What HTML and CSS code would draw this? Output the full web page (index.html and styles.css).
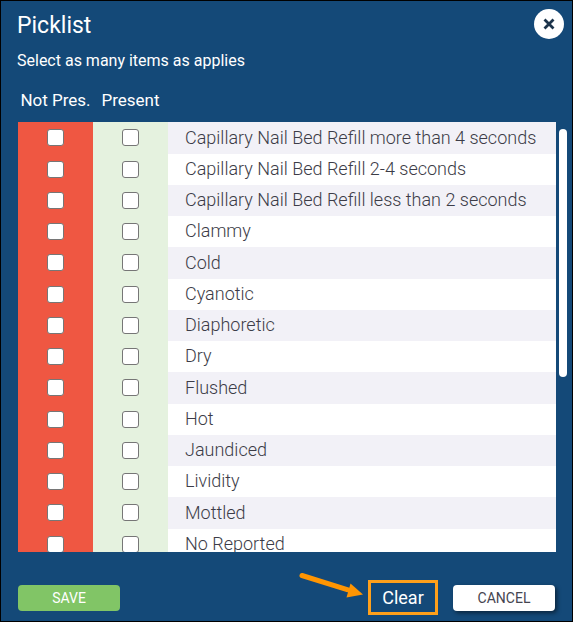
FILE: index.html
```html
<!DOCTYPE html>
<html lang="en">
<head>
<meta charset="utf-8">
<meta name="viewport" content="width=device-width, initial-scale=1">
<title>Picklist</title>
<link rel="stylesheet" href="styles.css">
</head>
<body>
<main class="dialog">
  <header class="header">
    <div>
      <h1 class="title">Picklist</h1>
      <p class="hint">Select as many items as applies</p>
    </div>
    <button class="close" type="button" aria-label="Close">
      <svg width="12" height="12" viewBox="0 0 12 12" aria-hidden="true"><path d="M1.5 1.5 10.5 10.5M10.5 1.5 1.5 10.5" stroke="#1c344b" stroke-width="2.8" fill="none"/></svg>
    </button>
  </header>
  <div class="list">
    <div class="scroller">
      <table class="items">
        <thead>
          <tr><th class="pick" scope="col">Not Pres.</th><th class="pick" scope="col">Present</th><th></th></tr>
        </thead>
        <tbody>
          <tr><td class="absent"><input type="checkbox" aria-label="Not present: Capillary Nail Bed Refill more than 4 seconds"></td><td class="present"><input type="checkbox" id="p1"></td><td class="name"><label for="p1">Capillary Nail Bed Refill more than 4 seconds</label></td></tr>
          <tr><td class="absent"><input type="checkbox" aria-label="Not present: Capillary Nail Bed Refill 2-4 seconds"></td><td class="present"><input type="checkbox" id="p2"></td><td class="name"><label for="p2">Capillary Nail Bed Refill 2-4 seconds</label></td></tr>
          <tr><td class="absent"><input type="checkbox" aria-label="Not present: Capillary Nail Bed Refill less than 2 seconds"></td><td class="present"><input type="checkbox" id="p3"></td><td class="name"><label for="p3">Capillary Nail Bed Refill less than 2 seconds</label></td></tr>
          <tr><td class="absent"><input type="checkbox" aria-label="Not present: Clammy"></td><td class="present"><input type="checkbox" id="p4"></td><td class="name"><label for="p4">Clammy</label></td></tr>
          <tr><td class="absent"><input type="checkbox" aria-label="Not present: Cold"></td><td class="present"><input type="checkbox" id="p5"></td><td class="name"><label for="p5">Cold</label></td></tr>
          <tr><td class="absent"><input type="checkbox" aria-label="Not present: Cyanotic"></td><td class="present"><input type="checkbox" id="p6"></td><td class="name"><label for="p6">Cyanotic</label></td></tr>
          <tr><td class="absent"><input type="checkbox" aria-label="Not present: Diaphoretic"></td><td class="present"><input type="checkbox" id="p7"></td><td class="name"><label for="p7">Diaphoretic</label></td></tr>
          <tr><td class="absent"><input type="checkbox" aria-label="Not present: Dry"></td><td class="present"><input type="checkbox" id="p8"></td><td class="name"><label for="p8">Dry</label></td></tr>
          <tr><td class="absent"><input type="checkbox" aria-label="Not present: Flushed"></td><td class="present"><input type="checkbox" id="p9"></td><td class="name"><label for="p9">Flushed</label></td></tr>
          <tr><td class="absent"><input type="checkbox" aria-label="Not present: Hot"></td><td class="present"><input type="checkbox" id="p10"></td><td class="name"><label for="p10">Hot</label></td></tr>
          <tr><td class="absent"><input type="checkbox" aria-label="Not present: Jaundiced"></td><td class="present"><input type="checkbox" id="p11"></td><td class="name"><label for="p11">Jaundiced</label></td></tr>
          <tr><td class="absent"><input type="checkbox" aria-label="Not present: Lividity"></td><td class="present"><input type="checkbox" id="p12"></td><td class="name"><label for="p12">Lividity</label></td></tr>
          <tr><td class="absent"><input type="checkbox" aria-label="Not present: Mottled"></td><td class="present"><input type="checkbox" id="p13"></td><td class="name"><label for="p13">Mottled</label></td></tr>
          <tr><td class="absent"><input type="checkbox" aria-label="Not present: No Reported"></td><td class="present"><input type="checkbox" id="p14"></td><td class="name"><label for="p14">No Reported</label></td></tr>
        </tbody>
      </table>
    </div>
    <div class="track" aria-hidden="true"><div class="thumb"></div></div>
  </div>
  <footer class="footer">
    <button class="btn save" type="button">SAVE</button>
    <div class="clear-group">
      <svg class="arrow" width="66" height="30" viewBox="0 0 66 30" aria-hidden="true"><path d="M5 4.5 51 18.8" stroke="#ff9502" stroke-width="5" stroke-linecap="round"/><path d="M53.5 12.5 66 23.5 49.5 26.5Z" fill="#ff9502"/></svg>
      <button class="clear" type="button">Clear</button>
    </div>
    <button class="btn cancel" type="button">CANCEL</button>
  </footer>
</main>
</body>
</html>
```
FILE: styles.css
```css
* {
  box-sizing: border-box;
}

body {
  margin: 0;
  font-family: Roboto, "Liberation Sans", sans-serif;
}

button {
  font-family: inherit;
  padding: 0;
  border: 0;
  cursor: pointer;
}

.dialog {
  display: flex;
  flex-direction: column;
  height: 100vh;
  padding: 8px 4px 6px 16px;
  border: 1px solid #000;
  background: #144978;
  color: #fff;
}

.header {
  display: flex;
  justify-content: space-between;
  align-items: flex-start;
  padding-right: 4px;
}

.title {
  margin: 0;
  font-size: 23px;
  font-weight: 400;
  line-height: 34px;
}

.hint {
  margin: 6px 0 0;
  font-size: 16px;
  line-height: 24px;
}

.close {
  display: grid;
  place-items: center;
  width: 30px;
  height: 30px;
  border-radius: 50%;
  background: #fff;
}

.list {
  display: flex;
  flex: 1;
  gap: 3px;
  min-height: 0;
  margin: 5px 1px 0;
}

.scroller {
  flex: 1;
  overflow-y: auto;
  scrollbar-width: none;
}

.track {
  width: 8px;
  padding-top: 51px;
}

.thumb {
  height: 248px;
  border-radius: 4px;
  background: #fff;
}

.items {
  width: 100%;
  table-layout: fixed;
  border-collapse: collapse;
}

.items th {
  position: sticky;
  top: 0;
  z-index: 1;
  height: 44px;
  padding: 0;
  background: #144978;
  font-size: 17px;
  font-weight: 400;
  white-space: nowrap;
}

.items .pick {
  width: 75px;
}

.items td {
  height: 31px;
  padding: 0 0 1px;
}

/* The average row is a quarter pixel taller than 31px. */
.items tr:nth-child(4n + 1) td {
  height: 32px;
}

.absent,
.present {
  vertical-align: middle;
}

.absent {
  background: #ef5742;
}

.present {
  background: #e5f2df;
}

.items .name {
  padding-left: 17px;
  background: #fff;
  color: #3c3c47;
  font-size: 18px;
  font-weight: 350;
  line-height: 24px;
}

.items tr:nth-child(odd) .name {
  background: #f2f1f7;
}

.items input {
  appearance: none;
  display: block;
  width: 17px;
  height: 17px;
  margin: 0 auto;
  border: 1px solid #767676;
  border-radius: 3px;
  background: #fff;
}

.items input:checked {
  background: #144978;
}

.footer {
  display: flex;
  align-items: center;
  margin: 28px 13px 0 1px;
}

.btn {
  width: 102px;
  height: 26px;
  border-radius: 4px;
  font-size: 14px;
}

.save {
  background: #81c566;
  color: #fff;
}

.cancel {
  background: #fff;
  color: #454550;
  box-shadow: 2px 2px 4px rgba(0, 0, 0, 0.5);
}

.clear-group {
  position: relative;
  margin: 0 15px 0 auto;
}

.arrow {
  position: absolute;
  right: 100%;
  top: -9px;
  margin-right: 5px;
}

.clear {
  display: block;
  width: 70px;
  height: 35px;
  border: 3px solid #ffa01b;
  background: transparent;
  color: #fff;
  font-size: 18px;
}
```
